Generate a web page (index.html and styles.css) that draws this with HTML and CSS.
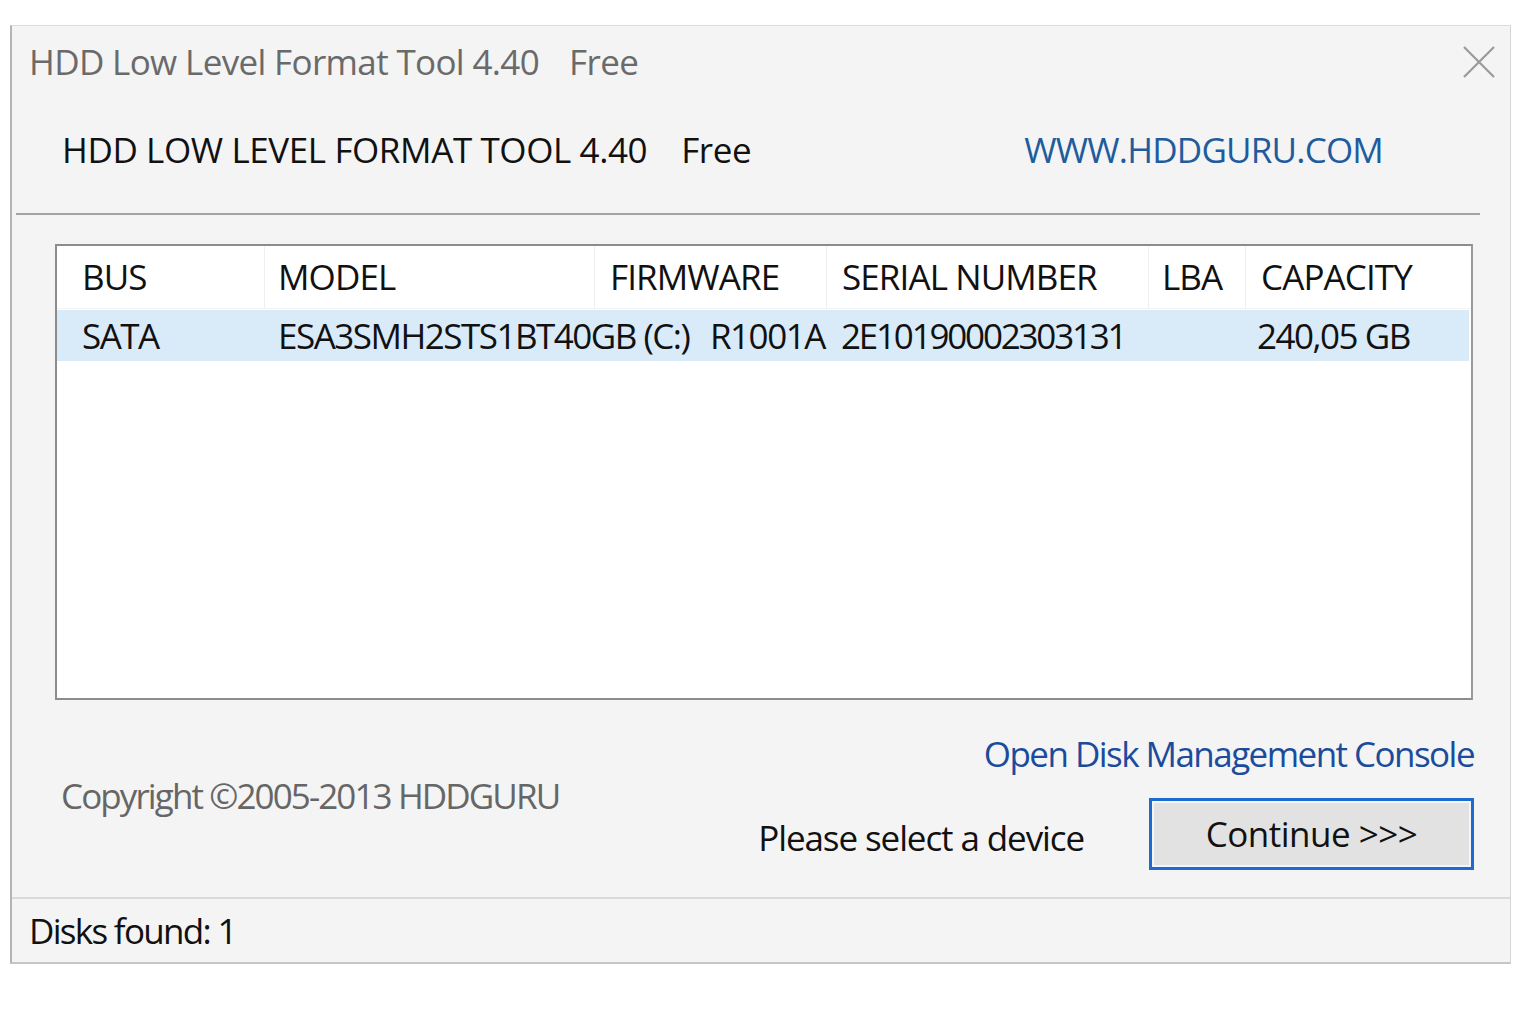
FILE: index.html
```html
<!DOCTYPE html>
<html>
<head>
<meta charset="utf-8">
<link rel="stylesheet" href="styles.css">
</head>
<body>
<div class="window">
  <div class="titlebar">
    <span class="title">HDD Low Level Format Tool 4.40<span class="gap"></span>Free</span>
    <svg class="close" width="34" height="34" viewBox="0 0 34 34"><path d="M2 2 L32 32 M32 2 L2 32" stroke="#9a9a9a" stroke-width="2.2" fill="none"/></svg>
  </div>
  <div class="header">
    <span class="app-name">HDD LOW LEVEL FORMAT TOOL 4.40<span class="gap2"></span>Free</span>
    <span class="url">WWW.HDDGURU.COM</span>
  </div>
  <div class="rule"></div>
  <div class="list">
    <div class="row head">
      <div class="cell c-bus">BUS</div>
      <div class="cell c-model sep">MODEL</div>
      <div class="cell c-fw sep">FIRMWARE</div>
      <div class="cell c-sn sep">SERIAL NUMBER</div>
      <div class="cell c-lba sep">LBA</div>
      <div class="cell c-cap sep">CAPACITY</div>
    </div>
    <div class="row data">
      <div class="cell c-bus">SATA</div>
      <div class="cell d-model">ESA3SMH2STS1BT40GB (C:)</div>
      <div class="cell d-fw">R1001A</div>
      <div class="cell d-sn">2E10190002303131</div>
      <div class="cell c-lba"></div>
      <div class="cell d-cap">240,05 GB</div>
    </div>
  </div>
  <div class="bottom">
    <div class="copyright">Copyright ©2005-2013 HDDGURU</div>
    <div class="actions">
      <div class="link">Open Disk Management Console</div>
      <div class="action-row">
        <span class="status-msg">Please select a device</span>
        <button class="btn">Continue &gt;&gt;&gt;</button>
      </div>
    </div>
  </div>
  <div class="statusbar">Disks found: 1</div>
</div>
</body>
</html>
```
FILE: styles.css
```css
html, body {
  margin: 0;
  padding: 0;
  background: #ffffff;
}
body {
  font-family: "Open Sans", "Noto Sans", sans-serif;
  font-size: 35px;
  letter-spacing: -0.9px;
  color: #111;
}
.window {
  margin-left: 10px;
  margin-top: 25px;
  width: 1498px;
  height: 936px;
  background: #f4f4f4;
  border-top: 1px solid #dcdcdc;
  border-right: 1px solid #d4d4d4;
  border-bottom: 2px solid #c6c6c6;
  border-left: 2px solid #b4b4b4;
  display: flex;
  flex-direction: column;
}
.titlebar {
  height: 70px;
  display: flex;
  align-items: center;
  justify-content: space-between;
  padding-left: 17px;
  padding-right: 14px;
}
.title {
  color: #6a6a6a;
  line-height: 70px;
  padding-top: 2px;
  letter-spacing: -0.65px;
}
.gap { display: inline-block; width: 30px; }
.gap2 { display: inline-block; width: 34px; }
.close { margin-top: 2px; }
.header {
  height: 117px;
  box-sizing: border-box;
  padding-top: 30px;
  padding-left: 50px;
  padding-right: 127px;
  display: flex;
  justify-content: space-between;
  line-height: 48px;
}
.app-name { color: #111; letter-spacing: -0.4px; }
.url { color: #1f5c9e; letter-spacing: -0.8px; }
.rule {
  margin-left: 4px;
  width: 1464px;
  height: 2px;
  background: #a3a3a3;
}
.list {
  margin-top: 29px;
  margin-left: 43px;
  width: 1414px;
  height: 452px;
  background: #fff;
  border: 2px solid #8c8c8c;
  border-right-color: #9a9a9a;
}
.row {
  display: flex;
}
.row.head {
  height: 62px;
  border-bottom: 1px solid #f2f2f2;
}
.row.data {
  height: 51px;
  background: #d9eaf8;
  margin-top: 1px;
  margin-right: 2px;
}
.cell {
  box-sizing: border-box;
  white-space: nowrap;
  padding-left: 15px;
}
.head .cell { line-height: 62px; padding-top: 0; }
.data .cell { line-height: 51px; padding-top: 0; letter-spacing: -1.5px; }
.sep { border-left: 1px solid #efefef; }
.c-bus { width: 207px; padding-left: 25px; }
.c-model { width: 330px; padding-left: 13px; }
.c-fw { width: 232px; }
.c-sn { width: 322px; }
.c-lba { width: 97px; padding-left: 13px; }
.c-cap { width: 224px; }
.d-model { width: 431px; padding-left: 14px; }
.d-fw { width: 131px; }
.data .d-sn { width: 322px; letter-spacing: -2.2px; }
.d-cap { width: 222px; padding-left: 12px; }
.bottom {
  height: 197px;
  display: flex;
  justify-content: space-between;
  border-bottom: 2px solid #dadada;
}
.copyright {
  color: #666;
  padding-left: 49px;
  padding-top: 72px;
  line-height: 48px;
  letter-spacing: -1.9px;
}
.actions {
  display: flex;
  flex-direction: column;
  align-items: flex-end;
  padding-right: 36px;
}
.link {
  color: #1b4c9c;
  line-height: 48px;
  margin-top: 30px;
  letter-spacing: -1.55px;
}
.action-row {
  margin-top: 20px;
  display: flex;
  align-items: center;
  gap: 65px;
}
.status-msg {
  line-height: 48px;
  padding-top: 8px;
  color: #111;
  letter-spacing: -1.1px;
}
.btn {
  width: 325px;
  height: 72px;
  font-family: inherit;
  font-size: 35px;
  letter-spacing: -0.5px;
  color: #111;
  background: #e2e2e2;
  border: 3px solid #1b6bd0;
  box-shadow: inset 0 0 0 2px #f2f6fb;
  padding: 0;
  line-height: 48px;
}
.statusbar {
  flex: 1;
  padding-left: 17px;
  padding-top: 8px;
  line-height: 48px;
  letter-spacing: -1.7px;
}
```
